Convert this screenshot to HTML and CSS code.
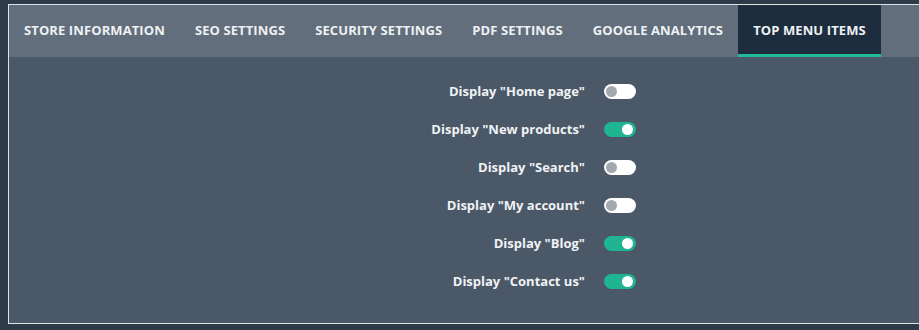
FILE: index.html
```html
<!DOCTYPE html>
<html lang="en">
<head>
<meta charset="utf-8">
<title>Settings</title>
<link rel="stylesheet" href="styles.css">
</head>
<body>
<div class="panel">
  <nav class="tabs">
    <a class="tab">Store information</a>
    <a class="tab">SEO settings</a>
    <a class="tab">Security settings</a>
    <a class="tab">PDF settings</a>
    <a class="tab">Google Analytics</a>
    <a class="tab active">Top menu items</a>
  </nav>
  <div class="content">
    <div class="row"><span class="label">Display "Home page"</span><span class="switch"></span></div>
    <div class="row"><span class="label">Display "New products"</span><span class="switch on"></span></div>
    <div class="row"><span class="label">Display "Search"</span><span class="switch"></span></div>
    <div class="row"><span class="label">Display "My account"</span><span class="switch"></span></div>
    <div class="row"><span class="label">Display "Blog"</span><span class="switch on"></span></div>
    <div class="row"><span class="label">Display "Contact us"</span><span class="switch on"></span></div>
  </div>
</div>
</body>
</html>
```

FILE: styles.css
```css
html, body {
  margin: 0;
  padding: 0;
  background: #2e3a47;
  height: 100%;
  overflow: hidden;
}
body {
  padding: 4px 0 0 8px;
  font-family: "Open Sans", "Liberation Sans", sans-serif;
}
.panel {
  border: 1px solid #dfe3e6;
  border-right: none;
  width: 930px;
  height: 320px;
  background: #4a5868;
  box-sizing: border-box;
}
.tabs {
  display: flex;
  background: #626e7b;
  height: 52px;
}
.tab {
  display: flex;
  align-items: center;
  padding: 0 15px;
  color: #eef1f4;
  font-weight: 700;
  font-size: 13px;
  text-transform: uppercase;
  letter-spacing: 0.1px;
  border-bottom: 3px solid transparent;
  box-sizing: border-box;
}
.tab.active {
  background: #1d2d3e;
  border-bottom-color: #1fbc98;
  padding: 0 15px 0 15px;
}
.content {
  display: flex;
  flex-direction: column;
  padding-top: 15px;
}
.row {
  display: grid;
  grid-template-columns: 576px auto;
  column-gap: 19px;
  align-items: center;
  height: 38px;
}
.label {
  text-align: right;
  color: #f0f2f4;
  font-weight: 700;
  font-size: 13px;
}
.switch {
  position: relative;
  width: 32px;
  height: 15px;
  border-radius: 8px;
  background: #ffffff;
}
.switch::after {
  content: "";
  position: absolute;
  top: 2px;
  left: 2px;
  width: 11px;
  height: 11px;
  border-radius: 50%;
  background: #a4a9b0;
}
.switch.on {
  background: #1fb592;
}
.switch.on::after {
  left: auto;
  right: 3px;
  background: #ffffff;
}
```
